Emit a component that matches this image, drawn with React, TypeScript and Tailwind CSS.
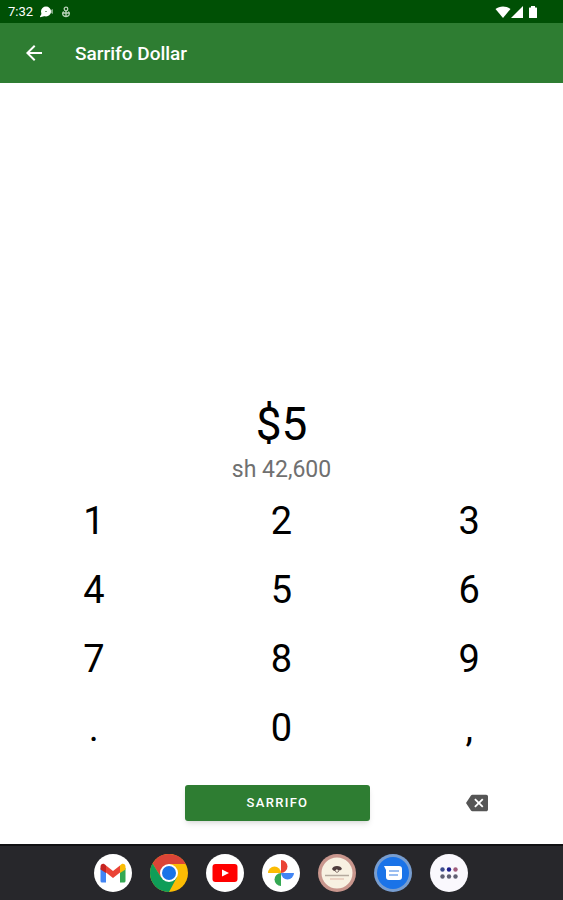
import type { ReactNode } from "react";

const KEYS = ["1", "2", "3", "4", "5", "6", "7", "8", "9", ".", "0", ","];

function StatusBar() {
  return (
    <div className="flex h-[23px] items-center justify-between bg-[#005005] pl-2 pr-6 text-white">
      <div className="flex items-center gap-1">
        <span className="w-7 text-[13px]">7:32</span>
        <svg className="h-3 w-4" viewBox="0 0 16 12" fill="#fff">
          <circle cx="6" cy="5.500" r="5" />
          <path d="M2 7-.5 11.500 5 10z" />
          <path d="M10 4.500 13 3v5l-3-1.500z" opacity=".5" />
          <path d="M5 5.500h2" stroke="#7da67f" />
        </svg>
        <svg
          className="h-3 w-3"
          viewBox="0 0 12 12"
          fill="none"
          stroke="#b9d2ba"
          strokeWidth="1.3"
        >
          <circle cx="6" cy="3" r="1.8" />
          <path d="M6 5v5M3.600 5.500C1 8 3.500 10.500 6 10.500S11 8 8.400 5.500M3 7h6" />
        </svg>
      </div>
      <div className="flex items-center">
        <svg className="h-3 w-4" viewBox="0 0 16 12" fill="#fff">
          <path d="M.5 3C4.500-.5 11.500-.5 15.500 3L8 12z" />
        </svg>
        <svg className="h-3 w-3" viewBox="0 0 12 12" fill="#fff">
          <path d="M12 0v12H0z" />
        </svg>
        <svg className="ml-1 h-3 w-3" viewBox="0 0 12 12" fill="#fff">
          <path d="M4 0h4v1.500h1.500q.5 0 .5.500v9.500q0 .5-.5.500h-7Q2 12 2 11.500V2q0-.5.500-.5H4z" />
        </svg>
      </div>
    </div>
  );
}

function Header() {
  return (
    <header className="flex h-15 items-center bg-[#2e7d32] pl-[22px] text-white">
      <button aria-label="Back" className="mr-[29px]">
        <svg className="h-6 w-6" viewBox="0 0 24 24" fill="#fff">
          <path d="M20 11H7.830l5.590-5.590L12 4l-8 8 8 8 1.410-1.410L7.830 13H20v-2z" />
        </svg>
      </button>
      <h1 className="pt-0.5 text-[19px] font-medium">Sarrifo Dollar</h1>
    </header>
  );
}

function AppIcon({ label, children }: { label: string; children: ReactNode }) {
  return (
    <button aria-label={label}>
      <svg className="h-[38px] w-[38px]" viewBox="0 0 38 38">
        {children}
      </svg>
    </button>
  );
}

function Dock() {
  return (
    <nav className="flex h-14 items-center justify-center gap-[18px] border-t-2 border-[#111113] bg-[#27272b] pr-0.5">
      <AppIcon label="Gmail">
        <circle cx="19" cy="19" r="19" fill="#fff" />
        <path d="M6.500 14v13q0 1.500 1.500 1.500h4V16z" fill="#4285f4" />
        <path d="M31.500 14v13q0 1.500-1.500 1.500h-4V16z" fill="#34a853" />
        <path d="M26 11.500V19l5.500-3.500V13c0-3-3-4.500-5.500-1.500z" fill="#fbbc04" />
        <path d="M12 11.500V19l-5.500-3.500V13c0-3 3-4.500 5.500-1.500z" fill="#c5221f" />
        <path d="M12 18.500v-7l7 5.500 7-5.500v7L19 24z" fill="#ea4335" />
      </AppIcon>
      <AppIcon label="Chrome">
        <circle cx="19" cy="19" r="19" fill="#fbbc04" />
        <path d="M19 10H35.700A19 19 0 0 0 2.550 9.500L11.200 23.500 19 19z" fill="#db4437" />
        <path d="M2.550 9.500A19 19 0 0 0 19 38L26.800 23.500 19 19 11.200 23.500z" fill="#0f9d58" />
        <circle cx="19" cy="19" r="9" fill="#fff" />
        <circle cx="19" cy="19" r="7" fill="#1a73e8" />
      </AppIcon>
      <AppIcon label="YouTube">
        <circle cx="19" cy="19" r="19" fill="#fff" />
        <rect x="6.500" y="10" width="25" height="18" rx="3" fill="#f00" />
        <path d="M16 15.500v7l7-3.500z" fill="#fff" />
      </AppIcon>
      <AppIcon label="Photos">
        <circle cx="19" cy="19" r="19" fill="#fff" />
        <path d="M19 6a6.500 6.500 0 0 1 0 13z" fill="#ea4335" />
        <path d="M32 19a6.500 6.500 0 0 1-13 0z" fill="#4285f4" />
        <path d="M19 32a6.500 6.500 0 0 1 0-13z" fill="#34a853" />
        <path d="M6 19a6.500 6.500 0 0 1 13 0z" fill="#fbbc04" />
      </AppIcon>
      <AppIcon label="Sarrifo">
        <circle cx="19" cy="19" r="19" fill="#c9968d" />
        <circle cx="19" cy="19" r="15.500" fill="#f8f1e2" />
        <path d="M14 15q1-3 5-3t5 3q-2 2-4 1.500L19 15l-2 2q-2 0-3-2z" fill="#4e3c3c" />
        <path d="M17 17q2 3 4 0" fill="none" stroke="#8a7771" />
        <path d="M7 21.500h24" stroke="#b5aa9e" strokeWidth="1.500" />
        <path d="M12 25h14" stroke="#dfb5a5" strokeWidth="1" />
      </AppIcon>
      <AppIcon label="Messages">
        <circle cx="19" cy="19" r="19" fill="#779dd0" />
        <circle cx="19" cy="19" r="16" fill="#1a73e8" />
        <path d="M10 12h15q3 0 3 3v8q0 3-3 3H15q-3 0-3-3v-7z" fill="#fff" />
        <path d="M15 17h10M15 21h9" stroke="#79a9ed" strokeWidth="1.500" />
      </AppIcon>
      <AppIcon label="All apps">
        <circle cx="19" cy="19" r="19" fill="#faf8fd" />
        <circle cx="12.500" cy="15.500" r="2.200" fill="#3c4a8c" />
        <circle cx="19" cy="15.500" r="2.200" fill="#1b1c8c" />
        <circle cx="25.500" cy="15.500" r="2.200" fill="#a05c7c" />
        <circle cx="12.500" cy="22.500" r="2.200" fill="#5f5f72" />
        <circle cx="19" cy="22.500" r="2.200" fill="#5f5f72" />
        <circle cx="25.500" cy="22.500" r="2.200" fill="#5f5f72" />
      </AppIcon>
    </nav>
  );
}

export default function App() {
  return (
    <div className="flex min-h-screen flex-col bg-white font-['Roboto',sans-serif] text-black">
      <StatusBar />
      <Header />
      <main className="flex flex-1 flex-col justify-end">
        <div className="text-center">
          <p className="text-[46px] leading-[60px]">$5</p>
          <p className="text-[23px] leading-8 text-[#707070]">sh 42,600</p>
        </div>
        <div className="grid grid-cols-3">
          {KEYS.map((key) => (
            <button key={key} className="h-[69px] pt-0.5 text-[38px]">
              {key}
            </button>
          ))}
        </div>
        <div className="grid h-[82px] grid-cols-3 items-center pr-2">
          <button className="col-start-2 h-9 rounded-[3px] bg-[#2e7d32] text-[13px] font-medium tracking-widest text-white shadow-md">
            SARRIFO
          </button>
          <button aria-label="Delete" className="ml-7 justify-self-center">
            <svg className="h-[22px] w-[22px]" viewBox="0 0 24 24" fill="#555">
              <path d="M22 3H7c-.690 0-1.230.350-1.590.880L0 12l5.410 8.110c.360.530.900.890 1.590.890h15c1.100 0 2-.900 2-2V5c0-1.100-.900-2-2-2zm-3 12.590L17.590 17 14 13.410 10.410 17 9 15.590 12.590 12 9 8.410 10.410 7 14 10.590 17.590 7 19 8.410 15.410 12 19 15.590z" />
            </svg>
          </button>
        </div>
      </main>
      <Dock />
    </div>
  );
}
